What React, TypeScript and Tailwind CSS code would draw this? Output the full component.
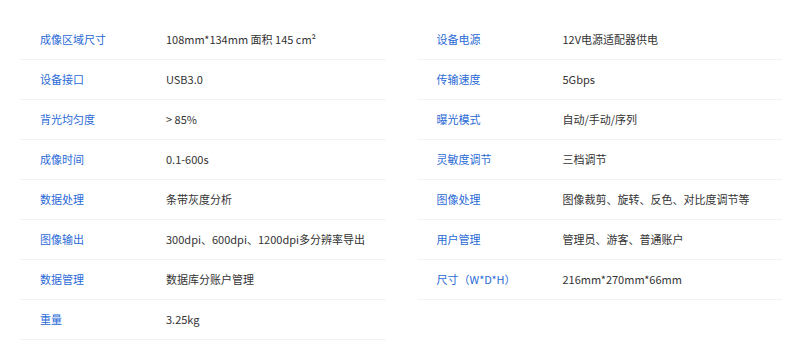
const left: [string, string][] = [
  ["成像区域尺寸", "108mm*134mm 面积 145 cm²"],
  ["设备接口", "USB3.0"],
  ["背光均匀度", "> 85%"],
  ["成像时间", "0.1-600s"],
  ["数据处理", "条带灰度分析"],
  ["图像输出", "300dpi、600dpi、1200dpi多分辨率导出"],
  ["数据管理", "数据库分账户管理"],
  ["重量", "3.25kg"],
];

const right: [string, string][] = [
  ["设备电源", "12V电源适配器供电"],
  ["传输速度", "5Gbps"],
  ["曝光模式", "自动/手动/序列"],
  ["灵敏度调节", "三档调节"],
  ["图像处理", "图像裁剪、旋转、反色、对比度调节等"],
  ["用户管理", "管理员、游客、普通账户"],
  ["尺寸（W*D*H）", "216mm*270mm*66mm"],
];

function SpecColumn({ rows }: { rows: [string, string][] }) {
  return (
    <div className="flex flex-col">
      {rows.map(([label, value]) => (
        <div
          key={label}
          className="flex h-10 items-center border-b border-[#f2f2f2]"
        >
          <span className="w-[146px] shrink-0 pl-5 text-[#2a6ad6]">{label}</span>
          <span className="text-[#333333]">{value}</span>
        </div>
      ))}
    </div>
  );
}

export default function App() {
  return (
    <div
      className="grid h-[351px] w-[800px] grid-cols-2 content-start gap-x-[31px] bg-white pt-5 pl-5 pr-[18px] text-[11px]"
      style={{ fontFamily: '"Noto Sans CJK SC", sans-serif' }}
    >
      <SpecColumn rows={left} />
      <SpecColumn rows={right} />
    </div>
  );
}
